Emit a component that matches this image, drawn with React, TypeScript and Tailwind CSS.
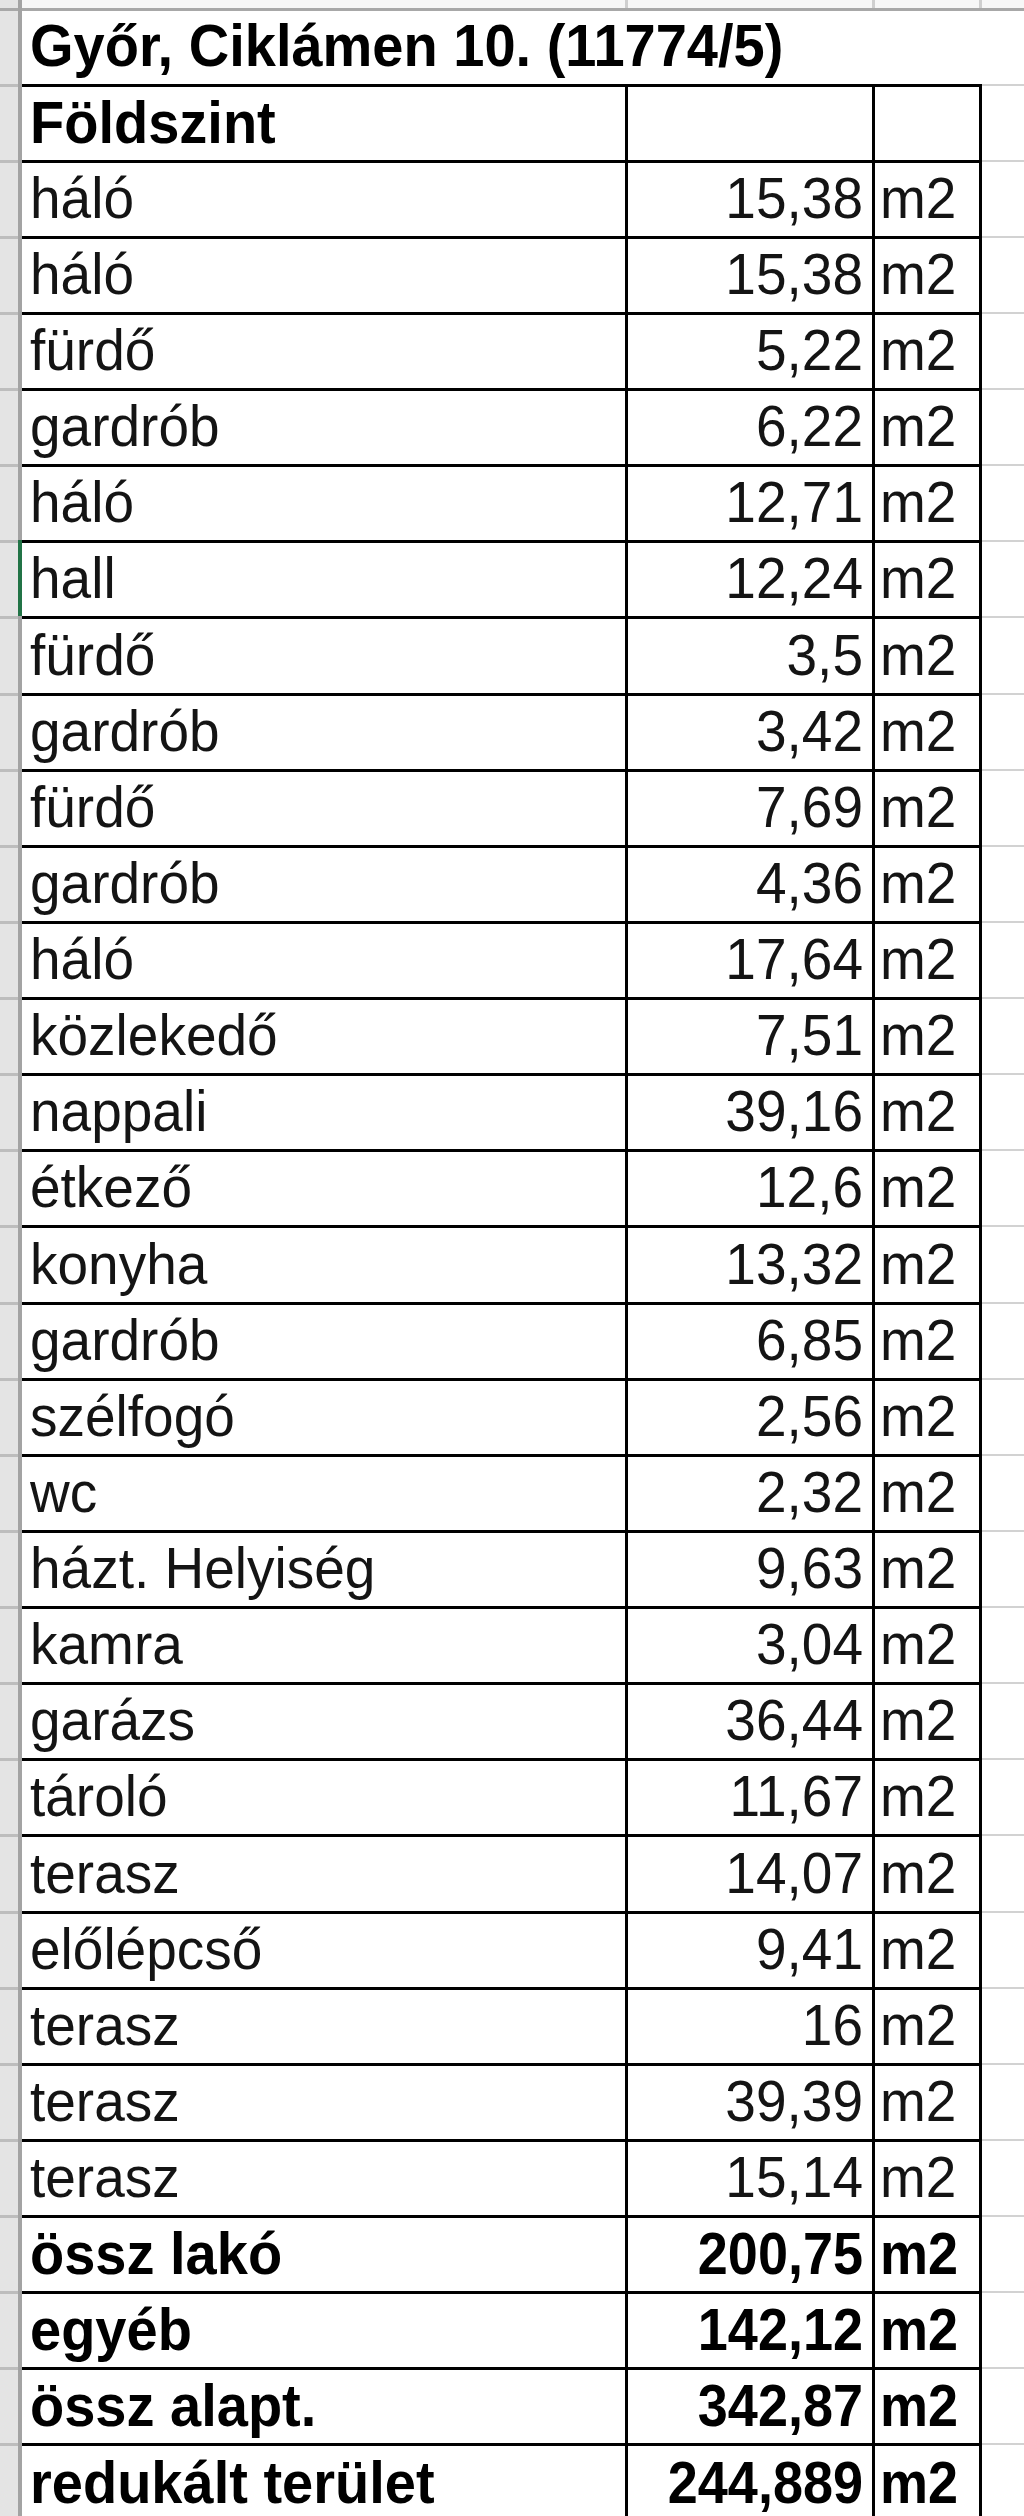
import React from "react";

type Row = { label: string; value: string; unit: string; bold?: boolean; selected?: boolean };

const rows: Row[] = [
  { label: "Földszint", value: "", unit: "", bold: true },
  { label: "háló", value: "15,38", unit: "m2" },
  { label: "háló", value: "15,38", unit: "m2" },
  { label: "fürdő", value: "5,22", unit: "m2" },
  { label: "gardrób", value: "6,22", unit: "m2" },
  { label: "háló", value: "12,71", unit: "m2" },
  { label: "hall", value: "12,24", unit: "m2", selected: true },
  { label: "fürdő", value: "3,5", unit: "m2" },
  { label: "gardrób", value: "3,42", unit: "m2" },
  { label: "fürdő", value: "7,69", unit: "m2" },
  { label: "gardrób", value: "4,36", unit: "m2" },
  { label: "háló", value: "17,64", unit: "m2" },
  { label: "közlekedő", value: "7,51", unit: "m2" },
  { label: "nappali", value: "39,16", unit: "m2" },
  { label: "étkező", value: "12,6", unit: "m2" },
  { label: "konyha", value: "13,32", unit: "m2" },
  { label: "gardrób", value: "6,85", unit: "m2" },
  { label: "szélfogó", value: "2,56", unit: "m2" },
  { label: "wc", value: "2,32", unit: "m2" },
  { label: "házt. Helyiség", value: "9,63", unit: "m2" },
  { label: "kamra", value: "3,04", unit: "m2" },
  { label: "garázs", value: "36,44", unit: "m2" },
  { label: "tároló", value: "11,67", unit: "m2" },
  { label: "terasz", value: "14,07", unit: "m2" },
  { label: "előlépcső", value: "9,41", unit: "m2" },
  { label: "terasz", value: "16", unit: "m2" },
  { label: "terasz", value: "39,39", unit: "m2" },
  { label: "terasz", value: "15,14", unit: "m2" },
  { label: "össz lakó", value: "200,75", unit: "m2", bold: true },
  { label: "egyéb", value: "142,12", unit: "m2", bold: true },
  { label: "össz alapt.", value: "342,87", unit: "m2", bold: true },
  { label: "redukált terület", value: "244,889", unit: "m2", bold: true },
];

function Txt({ children, bold, num }: { children: React.ReactNode; bold?: boolean; num?: boolean }) {
  let cls = "inline-block origin-bottom scale-y-[1.06] font-normal text-[#141414] text-[55px]";
  if (bold && num) cls = "inline-block origin-bottom scale-y-[1.08] font-bold text-black text-[54px]";
  else if (bold) cls = "inline-block origin-bottom scale-y-[1.05] font-bold text-black text-[56px]";
  return <span className={cls}>{children}</span>;
}

function TableRow({ row, tall }: { row: Row; tall: boolean }) {
  return (
    <div className={tall ? "flex h-[77px] shrink-0" : "flex h-[76px] shrink-0"}>
      <div className="w-[18px] shrink-0 bg-[#e4e4e4] border-t-[3px] border-[#bdbdbd]" />
      <div className={row.selected ? "w-[4px] shrink-0 bg-[#217346]" : "w-[4px] shrink-0 bg-[#a3a3a3]"} />
      <div className="w-[603px] shrink-0 border-t-[3px] border-black flex items-end pl-[8px] pb-[8px] whitespace-nowrap">
        <Txt bold={row.bold}>{row.label}</Txt>
      </div>
      <div className="w-[3px] shrink-0 bg-black" />
      <div className="w-[244px] shrink-0 border-t-[3px] border-black flex items-end justify-end pr-[9px] pb-[8px] whitespace-nowrap">
        <Txt bold={row.bold} num>{row.value}</Txt>
      </div>
      <div className="w-[3px] shrink-0 bg-black" />
      <div className="w-[104px] shrink-0 border-t-[3px] border-black flex items-end pl-[5px] pb-[8px] whitespace-nowrap">
        <Txt bold={row.bold} num>{row.unit}</Txt>
      </div>
      <div className="w-[3px] shrink-0 bg-black" />
      <div className="flex-1 border-t-[2px] border-[#d2d2d2] bg-white" />
    </div>
  );
}

export default function App() {
  return (
    <div className="w-[1024px] h-[2516px] overflow-hidden bg-white flex flex-col font-['Liberation_Sans',Arial,sans-serif] leading-none">
      {/* partial top row */}
      <div className="flex h-[8px] shrink-0">
        <div className="w-[18px] shrink-0 bg-[#e4e4e4]" />
        <div className="w-[4px] shrink-0 bg-[#a3a3a3]" />
        <div className="w-[603px] shrink-0 bg-[#f7f7f7]" />
        <div className="w-[3px] shrink-0 bg-[#cfcfcf]" />
        <div className="w-[244px] shrink-0 bg-[#f7f7f7]" />
        <div className="w-[3px] shrink-0 bg-[#cfcfcf]" />
        <div className="w-[104px] shrink-0 bg-[#f7f7f7]" />
        <div className="w-[3px] shrink-0 bg-[#cfcfcf]" />
        <div className="flex-1 bg-[#f7f7f7]" />
      </div>
      {/* title row */}
      <div className="flex h-[76px] shrink-0">
        <div className="w-[18px] shrink-0 bg-[#e4e4e4] border-t-[3px] border-[#a8a8a8]" />
        <div className="w-[4px] shrink-0 bg-[#a3a3a3]" />
        <div className="flex-1 border-t-[3px] border-[#a8a8a8] flex items-end pl-[8px] pb-[9px] whitespace-nowrap">
          <Txt bold>Győr, Ciklámen 10. (11774/5)</Txt>
        </div>
      </div>
      {rows.map((row, i) => (
        <TableRow key={i} row={row} tall={i % 8 === 7} />
      ))}
    </div>
  );
}
